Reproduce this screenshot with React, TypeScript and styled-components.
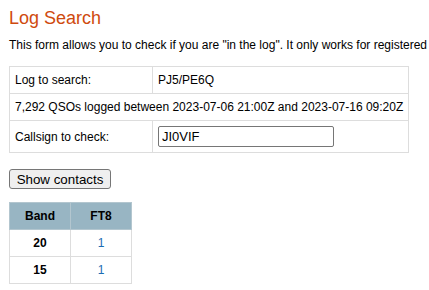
import React from "react";
import styled, { createGlobalStyle } from "styled-components";

const FONT = `"Liberation Sans", Arial, sans-serif`;

const Global = createGlobalStyle`
  html, body { margin: 0; padding: 0; background: #fff; }
  body { font-family: ${FONT}; color: #000; }
`;

const Page = styled.div`
  padding: 8px 9px;
  font-size: 12px;
`;

const Title = styled.h1`
  margin: 0;
  font-size: 18px;
  font-weight: normal;
  line-height: 21px;
  color: #cf4a0e;
`;

const Intro = styled.p`
  margin: 9px 0 14px;
  font-size: 12px;
  line-height: 14px;
  white-space: nowrap;
`;

const FormTable = styled.table`
  border-collapse: collapse;
  width: 399px;
  font-size: 12px;
`;

const Cell = styled.td<{ $w?: number }>`
  border: 1px solid #dddddd;
  padding: 6px 5px;
  line-height: 14px;
  vertical-align: middle;
  white-space: nowrap;
  width: ${(p) => (p.$w ? `${p.$w}px` : "auto")};
`;

const Input = styled.input`
  box-sizing: border-box;
  width: 176px;
  height: 21px;
  margin: -1px 0;
  padding: 1px 3px;
  border: 1px solid #767676;
  border-radius: 2px;
  font-family: ${FONT};
  font-size: 13px;
  color: #000;
  outline: none;
`;

const Button = styled.button`
  display: block;
  margin: 16px 0 13px;
  box-sizing: border-box;
  height: 20px;
  width: 102px;
  padding: 0 6px;
  background: #efefef;
  border: 1px solid #767676;
  border-radius: 3px;
  font-family: ${FONT};
  font-size: 13.333px;
  color: #000;
`;

const ResultTable = styled.table`
  border-collapse: collapse;
  width: 123px;
  font-size: 12px;
`;

const Head = styled.th`
  background: #98b5c3;
  border: 1px solid #b3c6cf;
  padding: 6px 5px;
  line-height: 14px;
  font-weight: bold;
  text-align: center;
  width: 50%;
`;

const Data = styled.td<{ $link?: boolean }>`
  border: 1px solid #dddddd;
  padding: 6px 5px;
  line-height: 14px;
  text-align: center;
  font-weight: ${(p) => (p.$link ? "normal" : "bold")};
  color: ${(p) => (p.$link ? "#1c6cb3" : "#000")};
`;

const rows = [
  { band: "20", ft8: "1" },
  { band: "15", ft8: "1" },
];

export default function App() {
  return (
    <Page>
      <Global />
      <Title>Log Search</Title>
      <Intro>
        This form allows you to check if you are "in the log". It only works for registered
      </Intro>
      <FormTable>
        <tbody>
          <tr>
            <Cell $w={132}>Log to search:</Cell>
            <Cell>PJ5/PE6Q</Cell>
          </tr>
          <tr>
            <Cell colSpan={2}>7,292 QSOs logged between 2023-07-06 21:00Z and 2023-07-16 09:20Z</Cell>
          </tr>
          <tr>
            <Cell $w={132}>Callsign to check:</Cell>
            <Cell>
              <Input defaultValue="JI0VIF" />
            </Cell>
          </tr>
        </tbody>
      </FormTable>
      <Button>Show contacts</Button>
      <ResultTable>
        <thead>
          <tr>
            <Head>Band</Head>
            <Head>FT8</Head>
          </tr>
        </thead>
        <tbody>
          {rows.map((r) => (
            <tr key={r.band}>
              <Data>{r.band}</Data>
              <Data $link>{r.ft8}</Data>
            </tr>
          ))}
        </tbody>
      </ResultTable>
    </Page>
  );
}
